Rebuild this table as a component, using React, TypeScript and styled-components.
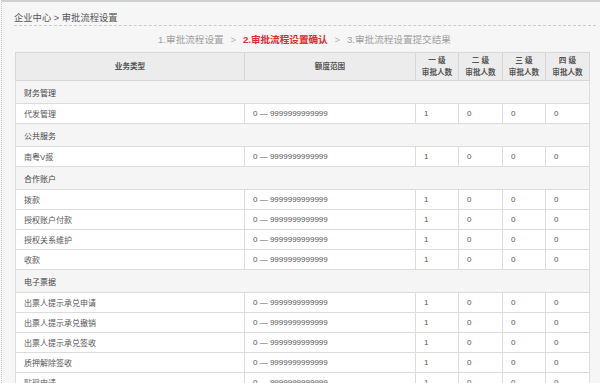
import React from "react";
import styled, { createGlobalStyle } from "styled-components";

const GlobalStyle = createGlobalStyle`
  html, body { margin: 0; padding: 0; background: #f6f6f6; }
  body {
    font-family: "Liberation Sans", Arial, "Noto Sans CJK SC", sans-serif;
    color: #555;
  }
`;

const Page = styled.div`
  width: 600px;
  height: 383px;
  box-sizing: border-box;
  overflow: hidden;
  background: #f6f6f6;
  border-top: 2px solid #cfcfcf;
  border-left: 1px dotted #c4c4c4;
  margin-left: 1px;
`;

const Breadcrumb = styled.div`
  margin: 0 5px 0 12px;
  padding: 10px 0 0 0;
  height: 13px;
  line-height: 12px;
  font-size: 9.3px;
  color: #555;
  border-bottom: 1px dashed #cccccc;
`;

const Steps = styled.div`
  display: flex;
  justify-content: center;
  align-items: center;
  gap: 7px;
  padding: 8px 0 0 0;
  height: 12px;
  margin-left: 6px;
  font-size: 9.6px;
  line-height: 12px;
  color: #a0a0a0;
`;

const Step = styled.span<{ $active?: boolean }>`
  color: ${(p) => (p.$active ? "#e0292b" : "#a0a0a0")};
  font-weight: ${(p) => (p.$active ? "bold" : "normal")};
`;

const Arrow = styled.span`
  color: #b0b0b0;
  font-size: 9px;
`;

const Table = styled.table`
  margin: 6px 0 0 13px;
  width: 574px;
  border-collapse: collapse;
  table-layout: fixed;
  font-size: 8px;
`;

const Th = styled.th`
  height: 27px;
  padding: 0;
  background: #ececec;
  border: 1px solid #d6d6d6;
  font-weight: bold;
  color: #555;
  font-size: 7.6px;
  line-height: 12px;
  text-align: center;
  vertical-align: middle;
`;

const CatCell = styled.td`
  height: 22px;
  padding: 0 0 0 8px;
  background: #f5f5f5;
  border: 1px solid #dcdcdc;
  color: #444;
  font-size: 8px;
  vertical-align: middle;
`;

const Cell = styled.td`
  height: 19px;
  padding: 0 0 0 8px;
  background: #ffffff;
  border: 1px solid #dcdcdc;
  color: #555;
  font-size: 8px;
  white-space: nowrap;
  overflow: hidden;
  vertical-align: middle;
`;

type Row = { cat: string } | { name: string };

const rows: Row[] = [
  { cat: "财务管理" },
  { name: "代发管理" },
  { cat: "公共服务" },
  { name: "南粤V报" },
  { cat: "合作账户" },
  { name: "拨款" },
  { name: "授权账户付款" },
  { name: "授权关系维护" },
  { name: "收款" },
  { cat: "电子票据" },
  { name: "出票人提示承兑申请" },
  { name: "出票人提示承兑撤销" },
  { name: "出票人提示承兑签收" },
  { name: "质押解除签收" },
  { name: "贴现申请" },
];

const levels = ["一 级", "二 级", "三 级", "四 级"];

export default function App() {
  return (
    <>
      <GlobalStyle />
      <Page>
        <Breadcrumb>企业中心 &gt; 审批流程设置</Breadcrumb>
        <Steps>
          <Step>1.审批流程设置</Step>
          <Arrow>&gt;</Arrow>
          <Step $active>2.审批流程设置确认</Step>
          <Arrow>&gt;</Arrow>
          <Step>3.审批流程设置提交结果</Step>
        </Steps>
        <Table>
          <colgroup>
            <col style={{ width: 229 }} />
            <col style={{ width: 171 }} />
            <col style={{ width: 43 }} />
            <col style={{ width: 44 }} />
            <col style={{ width: 43 }} />
            <col style={{ width: 44 }} />
          </colgroup>
          <thead>
            <tr>
              <Th>业务类型</Th>
              <Th>额度范围</Th>
              {levels.map((l) => (
                <Th key={l}>
                  {l}
                  <br />
                  审批人数
                </Th>
              ))}
            </tr>
          </thead>
          <tbody>
            {rows.map((r, i) =>
              "cat" in r ? (
                <tr key={i}>
                  <CatCell colSpan={6}>{r.cat}</CatCell>
                </tr>
              ) : (
                <tr key={i}>
                  <Cell>{r.name}</Cell>
                  <Cell>0 — 9999999999999</Cell>
                  <Cell>1</Cell>
                  <Cell>0</Cell>
                  <Cell>0</Cell>
                  <Cell>0</Cell>
                </tr>
              )
            )}
          </tbody>
        </Table>
      </Page>
    </>
  );
}
